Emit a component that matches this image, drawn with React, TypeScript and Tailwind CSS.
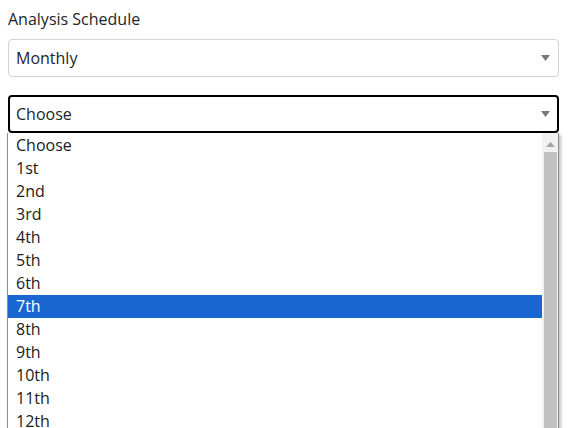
const days = [
  'Choose',
  '1st', '2nd', '3rd', '4th', '5th', '6th', '7th', '8th', '9th', '10th',
  '11th', '12th', '13th', '14th', '15th',
];

function Caret() {
  return (
    <svg width="9" height="6" viewBox="0 0 9 6" className="shrink-0">
      <path d="M0 0h9L4.5 6z" fill="#7a7a7a" />
    </svg>
  );
}

function SelectBox({ value, focused }: { value: string; focused?: boolean }) {
  return (
    <div
      className={`flex h-[38px] items-center justify-between rounded-[4px] bg-white ${
        focused ? 'border-2 border-black pl-[6px] pr-[7px]' : 'border border-[#ced4da] pl-[7px] pr-[8px]'
      }`}
    >
      <span className="leading-6 text-[#212529]">{value}</span>
      <Caret />
    </div>
  );
}

export default function App() {
  const selected = '7th';
  return (
    <div className="h-[428px] overflow-hidden bg-white font-['Open_Sans',sans-serif] text-[16px]">
      <div className="w-[559px] pl-[8px] pt-[7px]">
        <label className="mb-2 block leading-6 text-[#212529]">Analysis Schedule</label>
        <SelectBox value="Monthly" />
        <div className="mt-[18px]">
          <SelectBox value="Choose" focused />
        </div>
        <div className="-ml-px flex h-[300px] w-[552px] border border-t-0 border-[#8f8f8f] bg-white shadow-[2px_2px_3px_rgba(0,0,0,0.25)]">
          <ul className="flex-1 pt-px">
            {days.map((d) => (
              <li
                key={d}
                className={`h-[23px] pl-[8px] leading-[23px] ${
                  d === selected ? 'bg-[#1a67d2] text-white' : 'text-[#1b1b1b]'
                }`}
              >
                {d}
              </li>
            ))}
          </ul>
          <div className="flex w-[16px] flex-col items-center bg-[#f1f1f1] pt-[9px]">
            <svg width="9" height="5" viewBox="0 0 9 5">
              <path d="M4.5 0L9 5H0z" fill="#a3a3a3" />
            </svg>
            <div className="mt-[5px] w-[13px] flex-1 bg-[#c1c1c1]" />
          </div>
        </div>
      </div>
    </div>
  );
}
